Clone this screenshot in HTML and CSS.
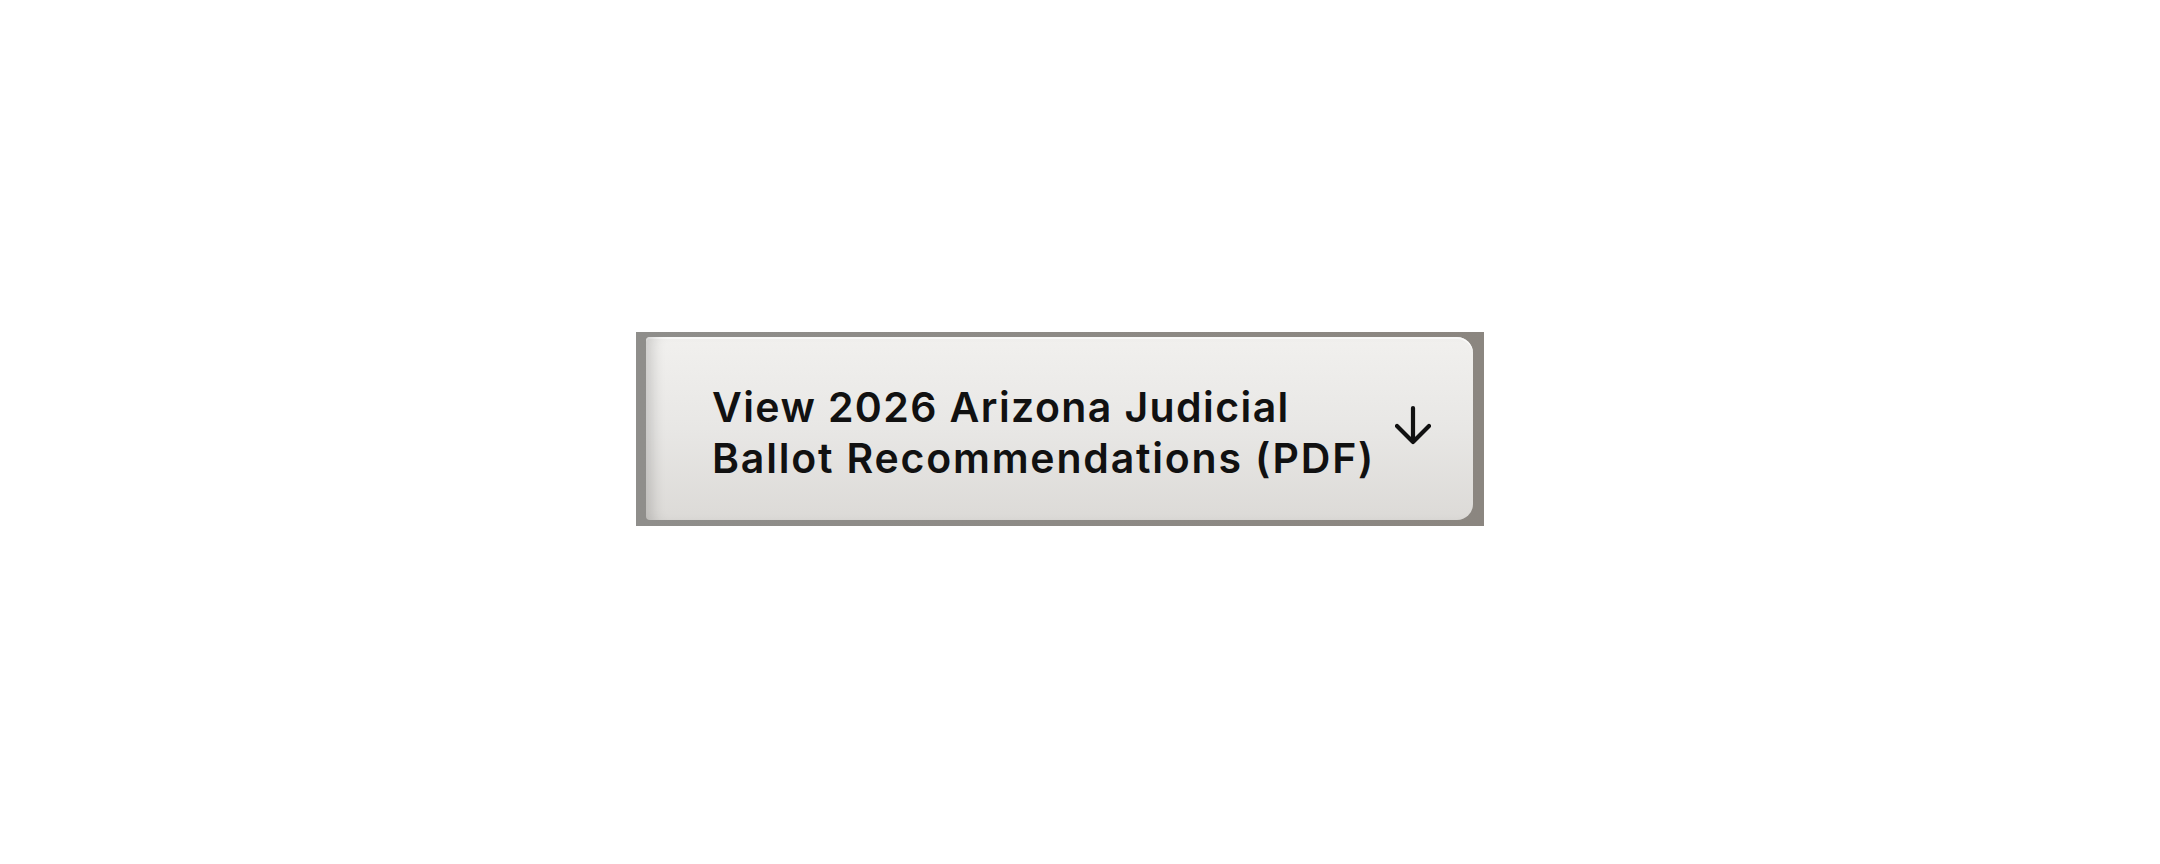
FILE: index.html
```html
<!DOCTYPE html>
<html lang="en">
<head>
    <meta charset="UTF-8">
    <meta name="viewport" content="width=device-width, initial-scale=1.0">
    <title>Judicial Ballot Recommendations</title>
    <link rel="stylesheet" href="styles.css">
</head>
<body>
    <div class="page">
        <div class="marco">
            <a class="btn-descarga" href="#">
                <span class="btn-texto">
                    <span class="linea">View 2026 Arizona Judicial</span>
                    <span class="linea linea-ancha">Ballot Recommendations (PDF)</span>
                </span>
                <svg class="icono-flecha" width="36" height="40" viewBox="0 0 36 40" aria-hidden="true">
                    <path d="M18 3 V37 M2 21 L18 37 L34 21" fill="none" stroke="#111" stroke-width="4.2" stroke-linecap="round" stroke-linejoin="round"/>
                </svg>
            </a>
        </div>
    </div>
</body>
</html>
```

FILE: styles.css
```css
html, body {
    margin: 0;
    padding: 0;
    background: #fff;
}
.page {
    padding: 332px 0 0 636px;
}
.marco {
    width: 848px;
    height: 194px;
    box-sizing: border-box;
    padding: 5px 11px 6px 10px;
    background: linear-gradient(90deg, #8f8e8b 0%, #8b8680 100%);
}
.btn-descarga {
    display: flex;
    align-items: center;
    gap: 20px;
    height: 100%;
    box-sizing: border-box;
    padding: 8px 0 0 66px;
    border-radius: 4px 16px 16px 4px;
    background: linear-gradient(180deg, #f1f0ee 0%, #e8e7e5 50%, #dcdad7 100%);
    box-shadow: inset 14px 0 14px -8px rgba(0,0,0,0.16), inset 0 2px 0 rgba(255,255,255,0.7);
    text-decoration: none;
    color: #111;
}
.btn-texto {
    font-family: 'Inter', 'Liberation Sans', Arial, sans-serif;
    font-size: 41px;
    font-weight: 600;
    line-height: 51px;
    letter-spacing: 1.4px;
}
.linea {
    display: block;
    white-space: nowrap;
}
.linea-ancha {
    letter-spacing: 1.8px;
}
.icono-flecha {
    display: block;
    margin-top: -15px;
}
```
